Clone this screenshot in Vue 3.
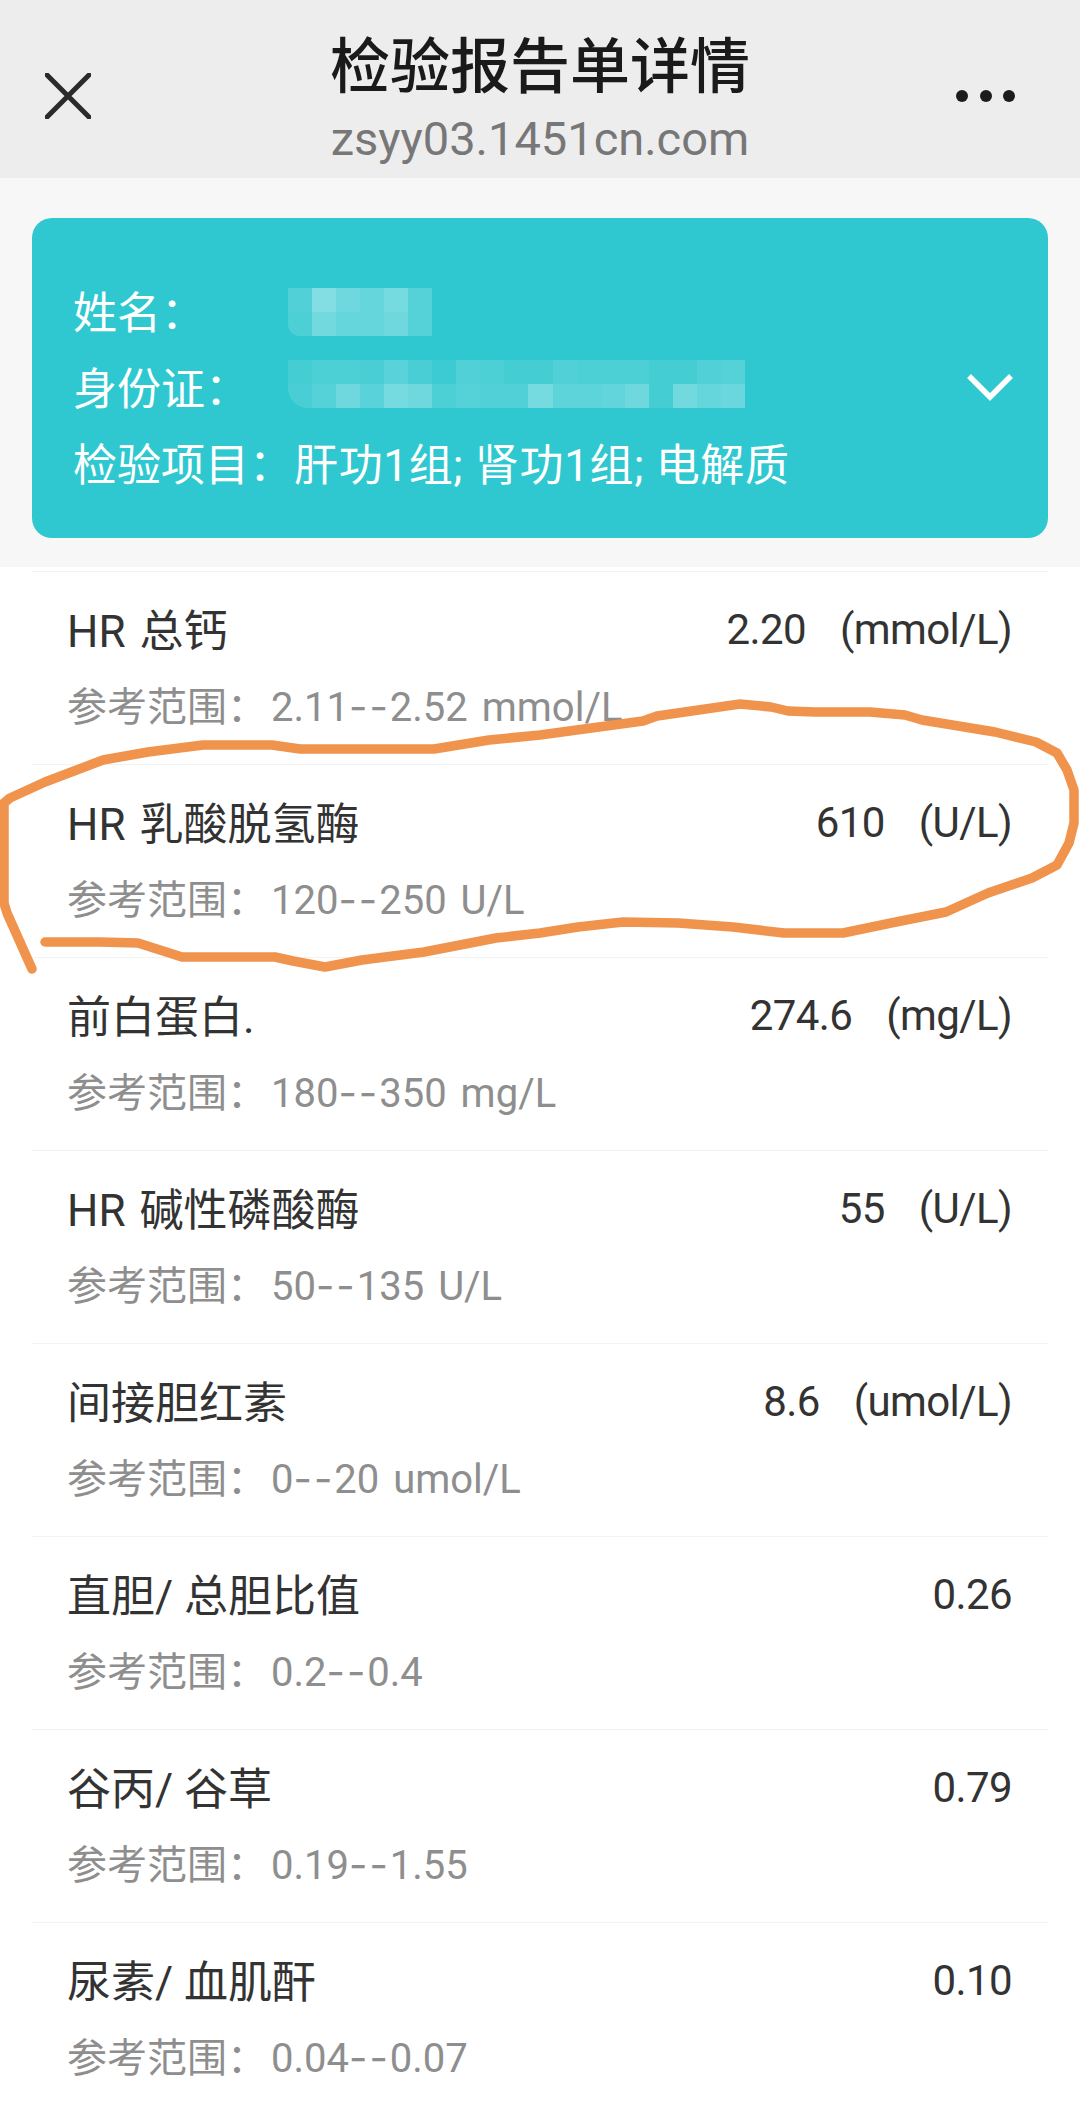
<script setup>
const rows = [
  { name: 'HR 总钙', value: '2.20', unit: '(mmol/L)', low: '2.11', high: '2.52 mmol/L' },
  { name: 'HR 乳酸脱氢酶', value: '610', unit: '(U/L)', low: '120', high: '250 U/L' },
  { name: '前白蛋白.', value: '274.6', unit: '(mg/L)', low: '180', high: '350 mg/L' },
  { name: 'HR 碱性磷酸酶', value: '55', unit: '(U/L)', low: '50', high: '135 U/L' },
  { name: '间接胆红素', value: '8.6', unit: '(umol/L)', low: '0', high: '20 umol/L' },
  { name: '直胆/ 总胆比值', value: '0.26', unit: '', low: '0.2', high: '0.4' },
  { name: '谷丙/ 谷草', value: '0.79', unit: '', low: '0.19', high: '1.55' },
  { name: '尿素/ 血肌酐', value: '0.10', unit: '', low: '0.04', high: '0.07' },
]
const nameCells = [.16,.4,.3,.26,.34,.18, .14,.32,.26,.26,.3,.18]
const idCells = [.1,.14,.14,.12,.2,.12,.06,.16,.14,.1,.1,.16,.14,.14,.14,.1,.1,.16,.18,
  .12,.18,.3,.2,.34,.3,.14,.18,.16,.16,.34,.22,.22,.24,.3,.1,.32,.26,.28]
const scribble = 'M32 969 L7 913 L4 903 L4 803 L10 798 L45 782 L103 760 L148 752 L203 745 L272 745 L300 749 L434 749 L489 740 L540 735 L643 721 L657 716 L740 704 L771 707 L788 711 L815 712 L870 712 L905 715 L922 720 L995 732 L1036 742 L1057 753 L1067 770 L1074 790 L1074 823 L1069 843 L1057 865 L1032 878 L988 893 L946 912 L891 923 L843 933 L784 933 L733 927 L678 923 L623 922 L578 927 L540 933 L496 938 L424 952 L362 960 L325 967 L293 961 L275 957 L182 957 L138 943 L100 942 L45 942'
</script>

<template>
  <div class="page">
    <header class="nav">
      <svg class="close" width="46" height="46" viewBox="0 0 46 46"><path d="M2 2 L44 44 M44 2 L2 44" stroke="#2a2a2a" stroke-width="5" stroke-linecap="square" fill="none"/></svg>
      <div class="nav-title">
        <div class="title">检验报告单详情</div>
        <div class="domain">zsyy03.1451cn.com</div>
      </div>
      <div class="dots"><i></i><i></i><i></i></div>
    </header>
    <section class="top">
      <div class="card">
        <div class="info">
          <div class="line"><span class="lbl">姓名&#xFF1A;</span></div>
          <div class="line"><span class="lbl">身份证&#xFF1A;</span></div>
          <div class="line"><span>检验项目&#xFF1A;<span class="items">肝功1组; 肾功1组; 电解质</span></span></div>
        </div>
        <div class="mosaic name-m"><b v-for="(c,i) in nameCells" :key="i" :style="{opacity:c}"></b></div>
        <div class="mosaic id-m"><b v-for="(c,i) in idCells" :key="i" :style="{opacity:c}"></b></div>
        <svg class="chev" width="48" height="30" viewBox="0 0 48 30"><path d="M3 4 L24 25 L45 4" stroke="#fff" stroke-width="5.5" fill="none"/></svg>
      </div>
    </section>
    <main class="list">
      <div v-for="r in rows" :key="r.name" class="row">
        <div class="main-line">
          <span class="name" :class="{ hr: r.name.startsWith('HR') }">{{ r.name }}</span>
          <span class="val">{{ r.value }}<span v-if="r.unit" class="unit">{{ r.unit }}</span></span>
        </div>
        <div class="range"><span class="range-lbl">参考范围&#xFF1A;</span>{{ r.low }}<span class="dash">--</span>{{ r.high }}</div>
      </div>
    </main>
    <svg class="scribble" width="1080" height="2108" viewBox="0 0 1080 2108">
      <path :d="scribble" fill="none" stroke="#f0934c" stroke-width="9.5" stroke-linecap="round" stroke-linejoin="round"/>
    </svg>
  </div>
</template>

<style>
html, body { margin: 0; background: #fff; }
</style>
<style scoped>
.page { position: relative; width: 1080px; height: 2108px; overflow: hidden; background: #fff; font-family: Roboto, "Noto Sans CJK SC", sans-serif; }
.nav { height: 178px; box-sizing: border-box; background: #ededed; display: flex; align-items: center; justify-content: space-between; padding: 0 65px 0 45px; }
.close { flex: none; margin-top: 14px; }
.nav-title { position: absolute; left: 0; right: 0; top: 30px; text-align: center; }
.title { font-size: 60px; line-height: 76px; font-weight: 500; color: #1a1a1a; }
.domain { font-size: 47px; line-height: 66px; color: #777; }
.dots { display: flex; gap: 11.5px; margin-top: 14px; }
.dots i { width: 12px; height: 12px; border-radius: 50%; background: #1c1c1c; }
.top { background: #f7f7f7; height: 389px; padding: 40px 32px 0; box-sizing: border-box; }
.card { height: 320px; box-sizing: border-box; border-radius: 20px; background: #30c8d0; padding: 58px 41px 0; position: relative; color: #fff; font-size: 44px; }
.line { height: 76px; line-height: 76px; }
.items { letter-spacing: .65px; margin-left: 1px; }
.mosaic { position: absolute; left: 256px; display: grid; grid-template-rows: repeat(2, 24px); grid-auto-columns: 24px; }
.mosaic b { background: #fff; display: block; }
.name-m { top: 70px; width: 144px; grid-template-columns: repeat(6, 24px); border-bottom-left-radius: 12px; overflow: hidden; }
.id-m { top: 142px; width: 457px; grid-template-columns: repeat(19, 24.05px); border-bottom-left-radius: 20px; overflow: hidden; }
.chev { position: absolute; right: 34px; top: 154px; }
.list { padding: 4px 32px 0; }
.row { height: 193px; box-sizing: border-box; border-top: 1px solid #f3f3f3; padding: 31px 35px 0; }
.main-line { display: flex; justify-content: space-between; align-items: flex-start; font-size: 44px; line-height: 58px; color: #333; }
.name.hr { word-spacing: 3px; }
.val { font-size: 42px; line-height: 54px; letter-spacing: -.6px; padding-right: 1px; }
.unit { margin-left: 34px; }
.range { font-size: 40px; line-height: 56px; color: #8e8e8e; margin-top: 18px; word-spacing: 4px; }
.range-lbl { margin-right: 4px; }
.dash { font-family: Inter, sans-serif; font-size: 40px; letter-spacing: 2px; }
.scribble { position: absolute; left: 0; top: 0; pointer-events: none; }
</style>
